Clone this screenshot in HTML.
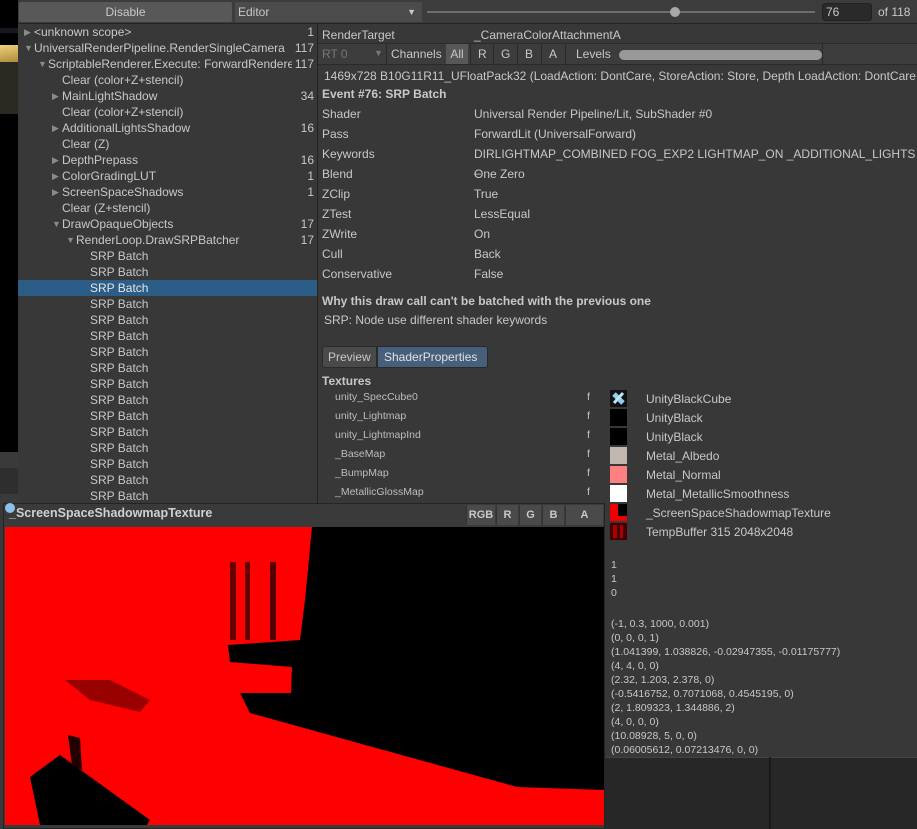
<!DOCTYPE html><html><head><style>
*{margin:0;padding:0;box-sizing:border-box}
body{width:917px;height:829px;overflow:hidden;background:#383838;font-family:"Liberation Sans",sans-serif;font-size:12px;color:#c8c8c8;position:relative}
.a{position:absolute;white-space:nowrap}
.r{position:absolute;height:16px;line-height:16px;left:18px;width:299px}
.r .n{position:absolute;right:3px;top:0}
.tri{position:absolute;top:0;font-size:9px;color:#8a8a8a}
.lbl{position:absolute;left:322px}
.val{position:absolute;left:474px}
.tx{position:absolute;left:335px;font-size:10.5px;color:#bdbdbd}
.f{position:absolute;left:587px;font-size:10.5px}
.sw{position:absolute;left:610px;width:17px;height:17px}
.tn{position:absolute;left:646px}
.num{position:absolute;left:611px;font-size:10.5px}
.btn{position:absolute;top:505px;height:20px;line-height:20px;text-align:center;background:#4a4a4a;color:#c8c8c8;font-size:11px;font-weight:bold;border-left:1px solid #333}
</style></head><body>
<div class="a" style="left:0;top:0;width:18px;height:452px;background:#000"></div>
<div class="a" style="left:0;top:28px;width:18px;height:5px;background:#15181d"></div>
<div class="a" style="left:0;top:45px;width:18px;height:18px;background:linear-gradient(170deg,#f1cf7a,#a88a3c)"></div>
<div class="a" style="left:0;top:62px;width:18px;height:52px;background:#2a2a22"></div>
<div class="a" style="left:0;top:452px;width:18px;height:50px;background:#3a3a3a"></div>
<div class="a" style="left:0;top:468px;width:18px;height:26px;background:#2e2e2e"></div>
<div class="a" style="left:18px;top:0;width:899px;height:24px;background:#3c3c3c;border-bottom:1px solid #232323"></div>
<div class="a" style="left:19px;top:2px;width:213px;height:20px;background:#585858;border-radius:2px;text-align:center;line-height:20px">Disable</div>
<div class="a" style="left:235px;top:2px;width:187px;height:20px;background:#4b4b4b;line-height:20px;padding-left:3px">Editor<span style="position:absolute;right:6px;font-size:9px">▼</span></div>
<div class="a" style="left:427px;top:11px;width:388px;height:2px;background:#6e6e6e"></div>
<div class="a" style="left:670px;top:7px;width:10px;height:10px;border-radius:5px;background:#a8a8a8"></div>
<div class="a" style="left:822px;top:3px;width:50px;height:18px;background:#2a2a2a;border:1px solid #212121;border-radius:3px;line-height:16px;padding-left:3px">76</div>
<div class="a" style="left:878px;top:5px">of 118</div>
<div class="a" style="left:317px;top:24px;width:1px;height:480px;background:#222"></div>
<div class="r" style="top:24px"><span class="tri" style="left:6px">▶</span><span class="a" style="left:16px">&lt;unknown scope&gt;</span><span class="n">1</span></div>
<div class="r" style="top:40px"><span class="tri" style="left:6px">▼</span><span class="a" style="left:16px;width:258px;overflow:hidden">UniversalRenderPipeline.RenderSingleCamera</span><span class="n">117</span></div>
<div class="r" style="top:56px"><span class="tri" style="left:20px">▼</span><span class="a" style="left:30px;width:244px;overflow:hidden">ScriptableRenderer.Execute: ForwardRenderer</span><span class="n">117</span></div>
<div class="r" style="top:72px"><span class="a" style="left:44px">Clear (color+Z+stencil)</span></div>
<div class="r" style="top:88px"><span class="tri" style="left:34px">▶</span><span class="a" style="left:44px">MainLightShadow</span><span class="n">34</span></div>
<div class="r" style="top:104px"><span class="a" style="left:44px">Clear (color+Z+stencil)</span></div>
<div class="r" style="top:120px"><span class="tri" style="left:34px">▶</span><span class="a" style="left:44px">AdditionalLightsShadow</span><span class="n">16</span></div>
<div class="r" style="top:136px"><span class="a" style="left:44px">Clear (Z)</span></div>
<div class="r" style="top:152px"><span class="tri" style="left:34px">▶</span><span class="a" style="left:44px">DepthPrepass</span><span class="n">16</span></div>
<div class="r" style="top:168px"><span class="tri" style="left:34px">▶</span><span class="a" style="left:44px">ColorGradingLUT</span><span class="n">1</span></div>
<div class="r" style="top:184px"><span class="tri" style="left:34px">▶</span><span class="a" style="left:44px">ScreenSpaceShadows</span><span class="n">1</span></div>
<div class="r" style="top:200px"><span class="a" style="left:44px">Clear (Z+stencil)</span></div>
<div class="r" style="top:216px"><span class="tri" style="left:34px">▼</span><span class="a" style="left:44px">DrawOpaqueObjects</span><span class="n">17</span></div>
<div class="r" style="top:232px"><span class="tri" style="left:48px">▼</span><span class="a" style="left:58px">RenderLoop.DrawSRPBatcher</span><span class="n">17</span></div>
<div class="r" style="top:248px"><span class="a" style="left:72px">SRP Batch</span></div>
<div class="r" style="top:264px"><span class="a" style="left:72px">SRP Batch</span></div>
<div class="r" style="top:280px;background:#2c5d87;color:#e6e6e6"><span class="a" style="left:72px">SRP Batch</span></div>
<div class="r" style="top:296px"><span class="a" style="left:72px">SRP Batch</span></div>
<div class="r" style="top:312px"><span class="a" style="left:72px">SRP Batch</span></div>
<div class="r" style="top:328px"><span class="a" style="left:72px">SRP Batch</span></div>
<div class="r" style="top:344px"><span class="a" style="left:72px">SRP Batch</span></div>
<div class="r" style="top:360px"><span class="a" style="left:72px">SRP Batch</span></div>
<div class="r" style="top:376px"><span class="a" style="left:72px">SRP Batch</span></div>
<div class="r" style="top:392px"><span class="a" style="left:72px">SRP Batch</span></div>
<div class="r" style="top:408px"><span class="a" style="left:72px">SRP Batch</span></div>
<div class="r" style="top:424px"><span class="a" style="left:72px">SRP Batch</span></div>
<div class="r" style="top:440px"><span class="a" style="left:72px">SRP Batch</span></div>
<div class="r" style="top:456px"><span class="a" style="left:72px">SRP Batch</span></div>
<div class="r" style="top:472px"><span class="a" style="left:72px">SRP Batch</span></div>
<div class="r" style="top:488px"><span class="a" style="left:72px">SRP Batch</span></div>
<div class="a" style="left:322px;top:28px">RenderTarget</div>
<div class="a" style="left:474px;top:28px">_CameraColorAttachmentA</div>
<div class="a" style="left:318px;top:43px;width:599px;height:22px;background:#3c3c3c;border-top:1px solid #2a2a2a;border-bottom:1px solid #2a2a2a"></div>
<div class="a" style="left:322px;top:47px;color:#777">RT 0<span style="position:absolute;left:52px;font-size:9px;top:1px">▼</span></div>
<div class="a" style="left:386px;top:44px;width:1px;height:20px;background:#2a2a2a"></div>
<div class="a" style="left:391px;top:47px">Channels</div>
<div class="a" style="left:446px;top:44px;width:22px;height:20px;background:#585858;text-align:center;line-height:20px">All</div>
<div class="a" style="left:478px;top:47px">R</div><div class="a" style="left:470px;top:44px;width:1px;height:20px;background:#2a2a2a"></div>
<div class="a" style="left:501px;top:47px">G</div><div class="a" style="left:493px;top:44px;width:1px;height:20px;background:#2a2a2a"></div>
<div class="a" style="left:525px;top:47px">B</div><div class="a" style="left:517px;top:44px;width:1px;height:20px;background:#2a2a2a"></div>
<div class="a" style="left:549px;top:47px">A</div><div class="a" style="left:541px;top:44px;width:1px;height:20px;background:#2a2a2a"></div>
<div class="a" style="left:565px;top:44px;width:1px;height:20px;background:#2a2a2a"></div>
<div class="a" style="left:576px;top:47px">Levels</div>
<div class="a" style="left:619px;top:50px;width:203px;height:10px;background:#999;border-radius:5px"></div>
<div class="a" style="left:822px;top:44px;width:1px;height:20px;background:#2a2a2a"></div>
<div class="a" style="left:324px;top:69px">1469x728 B10G11R11_UFloatPack32 (LoadAction: DontCare, StoreAction: Store, Depth LoadAction: DontCare</div>
<div class="a" style="left:322px;top:87px;font-weight:bold">Event #76: SRP Batch</div>
<div class="lbl" style="top:107px">Shader</div><div class="val" style="top:107px">Universal Render Pipeline/Lit, SubShader #0</div>
<div class="lbl" style="top:127px">Pass</div><div class="val" style="top:127px">ForwardLit (UniversalForward)</div>
<div class="lbl" style="top:147px">Keywords</div><div class="val" style="top:147px">DIRLIGHTMAP_COMBINED FOG_EXP2 LIGHTMAP_ON _ADDITIONAL_LIGHTS _</div>
<div class="lbl" style="top:167px">Blend</div><div class="val" style="top:167px">One Zero</div>
<div class="lbl" style="top:187px">ZClip</div><div class="val" style="top:187px">True</div>
<div class="lbl" style="top:207px">ZTest</div><div class="val" style="top:207px">LessEqual</div>
<div class="lbl" style="top:227px">ZWrite</div><div class="val" style="top:227px">On</div>
<div class="lbl" style="top:247px">Cull</div><div class="val" style="top:247px">Back</div>
<div class="lbl" style="top:267px">Conservative</div><div class="val" style="top:267px">False</div>
<div class="a" style="left:322px;top:294px;font-weight:bold">Why this draw call can't be batched with the previous one</div>
<div class="a" style="left:324px;top:313px">SRP: Node use different shader keywords</div>
<div class="a" style="left:322px;top:346px;width:55px;height:22px;background:#4a4a4a;border:1px solid #2a2a2a;border-radius:3px 0 0 3px;line-height:20px;padding-left:5px">Preview</div>
<div class="a" style="left:377px;top:346px;width:111px;height:22px;background:#46607c;border:1px solid #2a2a2a;border-radius:0 3px 3px 0;line-height:20px;padding-left:6px;color:#e0e0e0">ShaderProperties</div>
<div class="a" style="left:322px;top:374px;font-weight:bold">Textures</div>
<div class="tx" style="top:391px">unity_SpecCube0</div><div class="f" style="top:391px">f</div>
<div class="tx" style="top:410px">unity_Lightmap</div><div class="f" style="top:410px">f</div>
<div class="tx" style="top:429px">unity_LightmapInd</div><div class="f" style="top:429px">f</div>
<div class="tx" style="top:448px">_BaseMap</div><div class="f" style="top:448px">f</div>
<div class="tx" style="top:467px">_BumpMap</div><div class="f" style="top:467px">f</div>
<div class="tx" style="top:486px">_MetallicGlossMap</div><div class="f" style="top:486px">f</div>
<div class="sw" style="top:390px;background:#111"><svg width="17" height="17"><path d="M4 4L13 13" stroke="#8fd0f0" stroke-width="5"/><path d="M13 3L4 13" stroke="#bde4f6" stroke-width="3"/></svg></div>
<div class="sw" style="top:409px;background:#000"></div>
<div class="sw" style="top:428px;background:#000"></div>
<div class="sw" style="top:447px;background:#c0b8b0"></div>
<div class="sw" style="top:466px;background:#ff8080"></div>
<div class="sw" style="top:485px;background:#fff"></div>
<div class="sw" style="top:504px;background:#e00"><div style="position:absolute;left:8px;top:0;width:9px;height:12px;background:#000"></div></div>
<div class="sw" style="top:523px;background:#400"><div style="position:absolute;left:3px;top:2px;width:4px;height:13px;background:#a00"></div><div style="position:absolute;left:10px;top:2px;width:3px;height:13px;background:#a00"></div></div>
<div class="tn" style="top:392px">UnityBlackCube</div>
<div class="tn" style="top:411px">UnityBlack</div>
<div class="tn" style="top:430px">UnityBlack</div>
<div class="tn" style="top:449px">Metal_Albedo</div>
<div class="tn" style="top:468px">Metal_Normal</div>
<div class="tn" style="top:487px">Metal_MetallicSmoothness</div>
<div class="tn" style="top:506px">_ScreenSpaceShadowmapTexture</div>
<div class="tn" style="top:525px">TempBuffer 315 2048x2048</div>
<div class="num" style="top:559px">1</div>
<div class="num" style="top:573px">1</div>
<div class="num" style="top:587px">0</div>
<div class="num" style="top:618px">(-1, 0.3, 1000, 0.001)</div>
<div class="num" style="top:632px">(0, 0, 0, 1)</div>
<div class="num" style="top:646px">(1.041399, 1.038826, -0.02947355, -0.01175777)</div>
<div class="num" style="top:660px">(4, 4, 0, 0)</div>
<div class="num" style="top:674px">(2.32, 1.203, 2.378, 0)</div>
<div class="num" style="top:688px">(-0.5416752, 0.7071068, 0.4545195, 0)</div>
<div class="num" style="top:702px">(2, 1.809323, 1.344886, 2)</div>
<div class="num" style="top:716px">(4, 0, 0, 0)</div>
<div class="num" style="top:730px">(10.08928, 5, 0, 0)</div>
<div class="num" style="top:744px">(0.06005612, 0.07213476, 0, 0)</div>
<div class="a" style="left:604px;top:757px;width:313px;height:72px;background:#272727;border-top:1px solid #444"></div>
<div class="a" style="left:769px;top:757px;width:2px;height:72px;background:#1a1a1a"></div>
<div class="a" style="left:3px;top:503px;width:602px;height:326px;background:#3a3a3a;border:1px solid #242424"></div>
<div class="a" style="left:5px;top:503px;width:10px;height:10px;border-radius:5px;background:#8cc0ea"></div>
<div class="a" style="left:9px;top:506px;font-size:12.5px;font-weight:bold;color:#d0d0d0">_ScreenSpaceShadowmapTexture</div>
<div class="btn" style="left:466px;width:29px">RGB</div>
<div class="btn" style="left:496px;width:22px">R</div>
<div class="btn" style="left:519px;width:22px">G</div>
<div class="btn" style="left:542px;width:22px">B</div>
<div class="btn" style="left:565px;width:38px">A</div>
<svg class="a" style="left:5px;top:527px" width="599" height="298" viewBox="5 527 599 298">
<rect x="5" y="527" width="599" height="298" fill="#ff0000"/>
<polygon points="312,527 604,527 604,790 517,787 250,713 240,693 291,693 292,667 230,662 228,645 300,640 305,600" fill="#000"/>
<polygon points="230,562 236,562 236,640 230,640" fill="#600"/>
<polygon points="245,562 250,562 250,640 245,640" fill="#600"/>
<polygon points="270,562 276,562 276,640 270,640" fill="#500"/>
<polygon points="65,680 110,680 150,700 140,712 90,700" fill="#900"/>
<polygon points="30,777 60,755 150,820 147,825 40,825" fill="#000"/>
<polygon points="68,735 80,738 82,770 72,765" fill="#200"/>
</svg>
</body></html>
